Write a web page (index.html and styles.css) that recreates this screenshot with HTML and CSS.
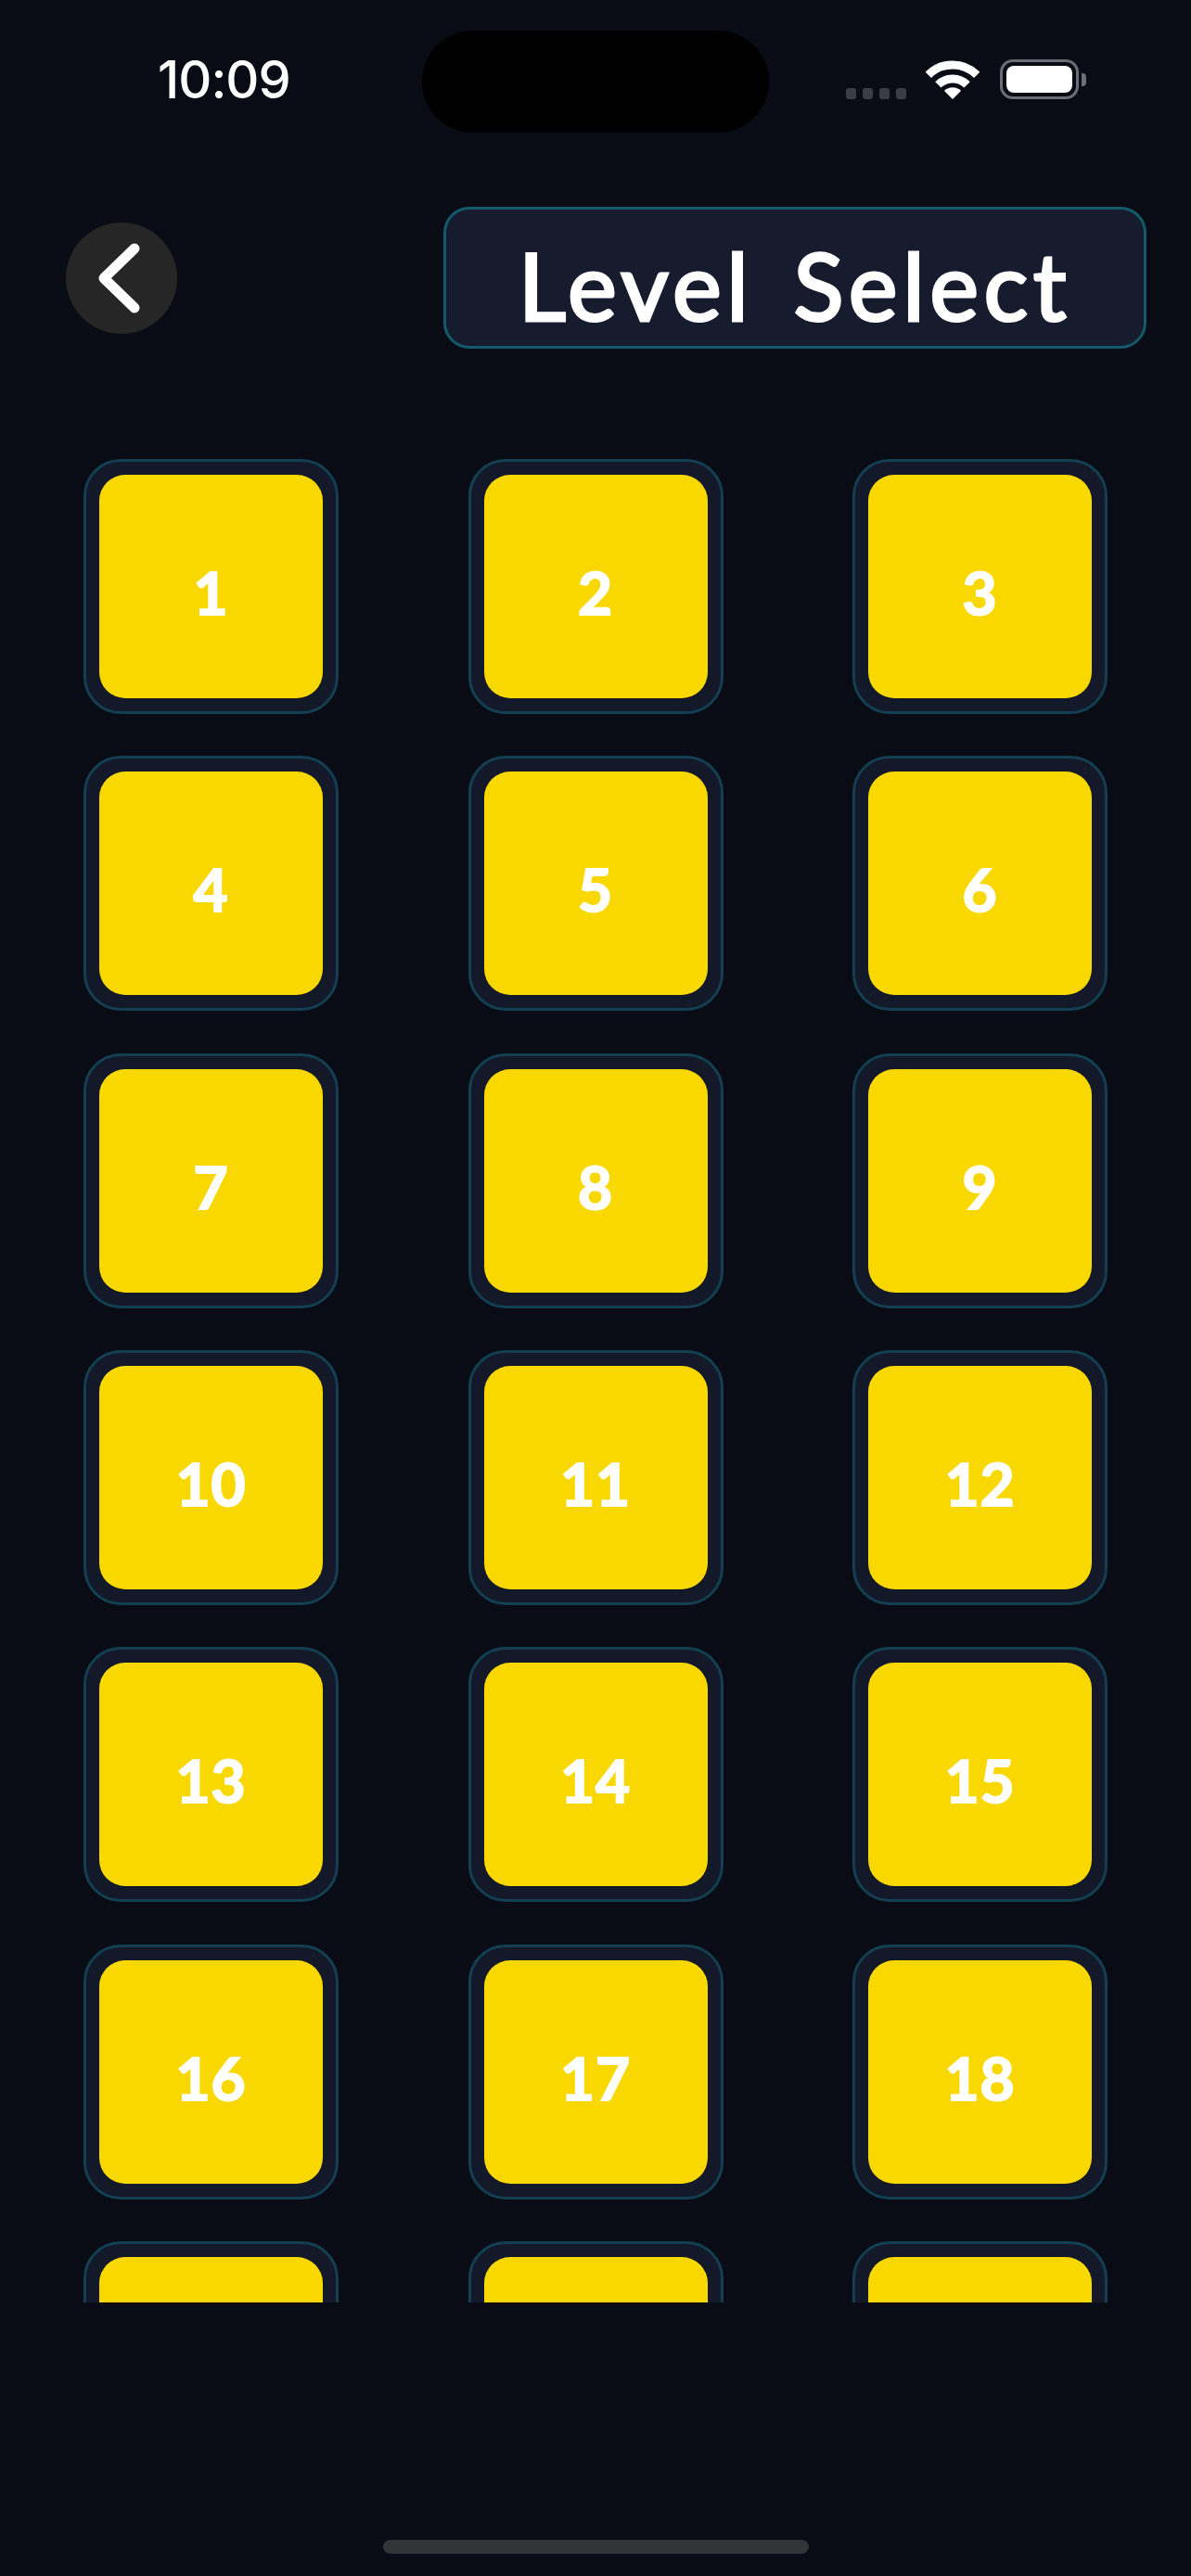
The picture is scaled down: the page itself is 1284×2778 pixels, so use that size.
FILE: index.html
```html
<!DOCTYPE html>
<html lang="en">
<head>
  <meta charset="UTF-8" />
  <title>Level Select</title>
  <link rel="stylesheet" href="styles.css">
</head>
<body>

<div class="status-bar">
  <div class="time-wrap"><span class="time">10:09</span></div>
  <div class="island"></div>
  <div class="status-icons">
    <div class="signal"><i></i><i></i><i></i><i></i></div>
    <svg class="wifi" width="58" height="43" viewBox="0 0 58 43" fill="none">
      <path d="M2.8 16.8A37 37 0 0 1 55.2 16.8" stroke="#fff" stroke-width="9"/>
      <path d="M13.4 27.4A22 22 0 0 1 44.6 27.4" stroke="#fff" stroke-width="9"/>
      <path d="M29 43L20 34A12.7 12.7 0 0 1 38 34Z" fill="#fff"/>
    </svg>
    <div class="battery"><div class="battery-level"></div></div>
    <div class="battery-cap"></div>
  </div>
</div>

<div class="header">
  <button class="back">
    <svg width="48" height="80" viewBox="0 0 48 80" fill="none">
      <path d="M41 8L8 40L41 72" stroke="#fff" stroke-width="11" stroke-linecap="round" stroke-linejoin="round"/>
    </svg>
  </button>
  <div class="title"><h1>Level Select</h1></div>
</div>

<div class="levels">
  <div class="tile"><div class="face">1</div></div>
  <div class="tile"><div class="face">2</div></div>
  <div class="tile"><div class="face">3</div></div>
  <div class="tile"><div class="face">4</div></div>
  <div class="tile"><div class="face">5</div></div>
  <div class="tile"><div class="face">6</div></div>
  <div class="tile"><div class="face">7</div></div>
  <div class="tile"><div class="face">8</div></div>
  <div class="tile"><div class="face">9</div></div>
  <div class="tile"><div class="face">10</div></div>
  <div class="tile"><div class="face">11</div></div>
  <div class="tile"><div class="face">12</div></div>
  <div class="tile"><div class="face">13</div></div>
  <div class="tile"><div class="face">14</div></div>
  <div class="tile"><div class="face">15</div></div>
  <div class="tile"><div class="face">16</div></div>
  <div class="tile"><div class="face">17</div></div>
  <div class="tile"><div class="face">18</div></div>
  <!-- last row is scrolled past the cut, its numbers don't show -->
  <div class="tile"><div class="face"></div></div>
  <div class="tile"><div class="face"></div></div>
  <div class="tile"><div class="face"></div></div>
</div>

<div class="home-bar"></div>

</body>
</html>
```

FILE: styles.css
```css
body {
  margin: 0;
  height: 2778px;
  overflow: hidden;
  background: #090c14;
  font-family: "Lato", sans-serif;
  color: #fff;
}

/* status bar */
.status-bar { display: flex; padding-top: 33px; height: 110px; }
.time-wrap { width: 455px; padding-left: 170px; box-sizing: border-box; }
.time {
  display: block;
  margin-top: 23px;
  font-family: "Inter", sans-serif;
  font-size: 56px;
  line-height: 60px;
  font-weight: 500;
  letter-spacing: -1px;
}
.island { width: 374px; height: 110px; background: #000; border-radius: 55px; }
.status-icons { display: flex; align-items: flex-start; padding: 31px 0 0 83px; }
.signal { display: flex; gap: 7px; margin-top: 31px; }
.signal i { width: 11px; height: 12px; background: #3a3d47; border-radius: 3px; }
.wifi { margin-left: 21px; }
.battery {
  margin-left: 22px;
  width: 85px;
  height: 43px;
  box-sizing: border-box;
  border: 3px solid #6d6e75;
  border-radius: 14px;
  padding: 4px;
}
.battery-level { height: 100%; background: #fff; border-radius: 8px; }
.battery-cap {
  width: 5px;
  height: 14px;
  margin: 15px 0 0 3px;
  background: #6d6e75;
  border-radius: 0 4px 4px 0;
}

/* header */
.header {
  display: flex;
  align-items: center;
  justify-content: space-between;
  margin-top: 80px;
  padding: 0 48px 0 71px;
}
.back {
  display: flex;
  align-items: center;
  justify-content: center;
  width: 120px;
  height: 120px;
  padding: 0 6px 0 0;
  border: none;
  border-radius: 50%;
  background: #262626;
}
.title {
  display: flex;
  align-items: center;
  justify-content: center;
  width: 758px;
  height: 153px;
  box-sizing: border-box;
  border: 3px solid #125a6c;
  border-radius: 28px;
  background: #161b2e;
}
.title h1 {
  margin: 14px 0 0;
  font-size: 100px;
  line-height: 120px;
  font-weight: 400;
  letter-spacing: 5.5px;
  word-spacing: 12px;
  -webkit-text-stroke: 3px #fff;
}

/* level grid, cut off above the home bar */
.levels {
  display: grid;
  grid-template-columns: repeat(3, 275px);
  justify-content: space-between;
  row-gap: 45.33px;
  height: 1988px;
  overflow: hidden;
  margin-top: 119px;
  padding: 0 90px;
}
.tile {
  height: 275px;
  box-sizing: border-box;
  padding: 14px;
  border: 3px solid #123f52;
  border-radius: 40px;
  background: #131929;
}
.face {
  display: flex;
  align-items: center;
  justify-content: center;
  height: 100%;
  padding-top: 12px;
  box-sizing: border-box;
  background: #f8d800;
  border-radius: 28px;
  font-size: 64px;
  font-weight: 700;
  letter-spacing: 1px;
  -webkit-text-stroke: 2px #fff;
}

.home-bar {
  width: 459px;
  height: 15px;
  margin: 256px auto 0;
  background: #333437;
  border-radius: 8px;
}
```
